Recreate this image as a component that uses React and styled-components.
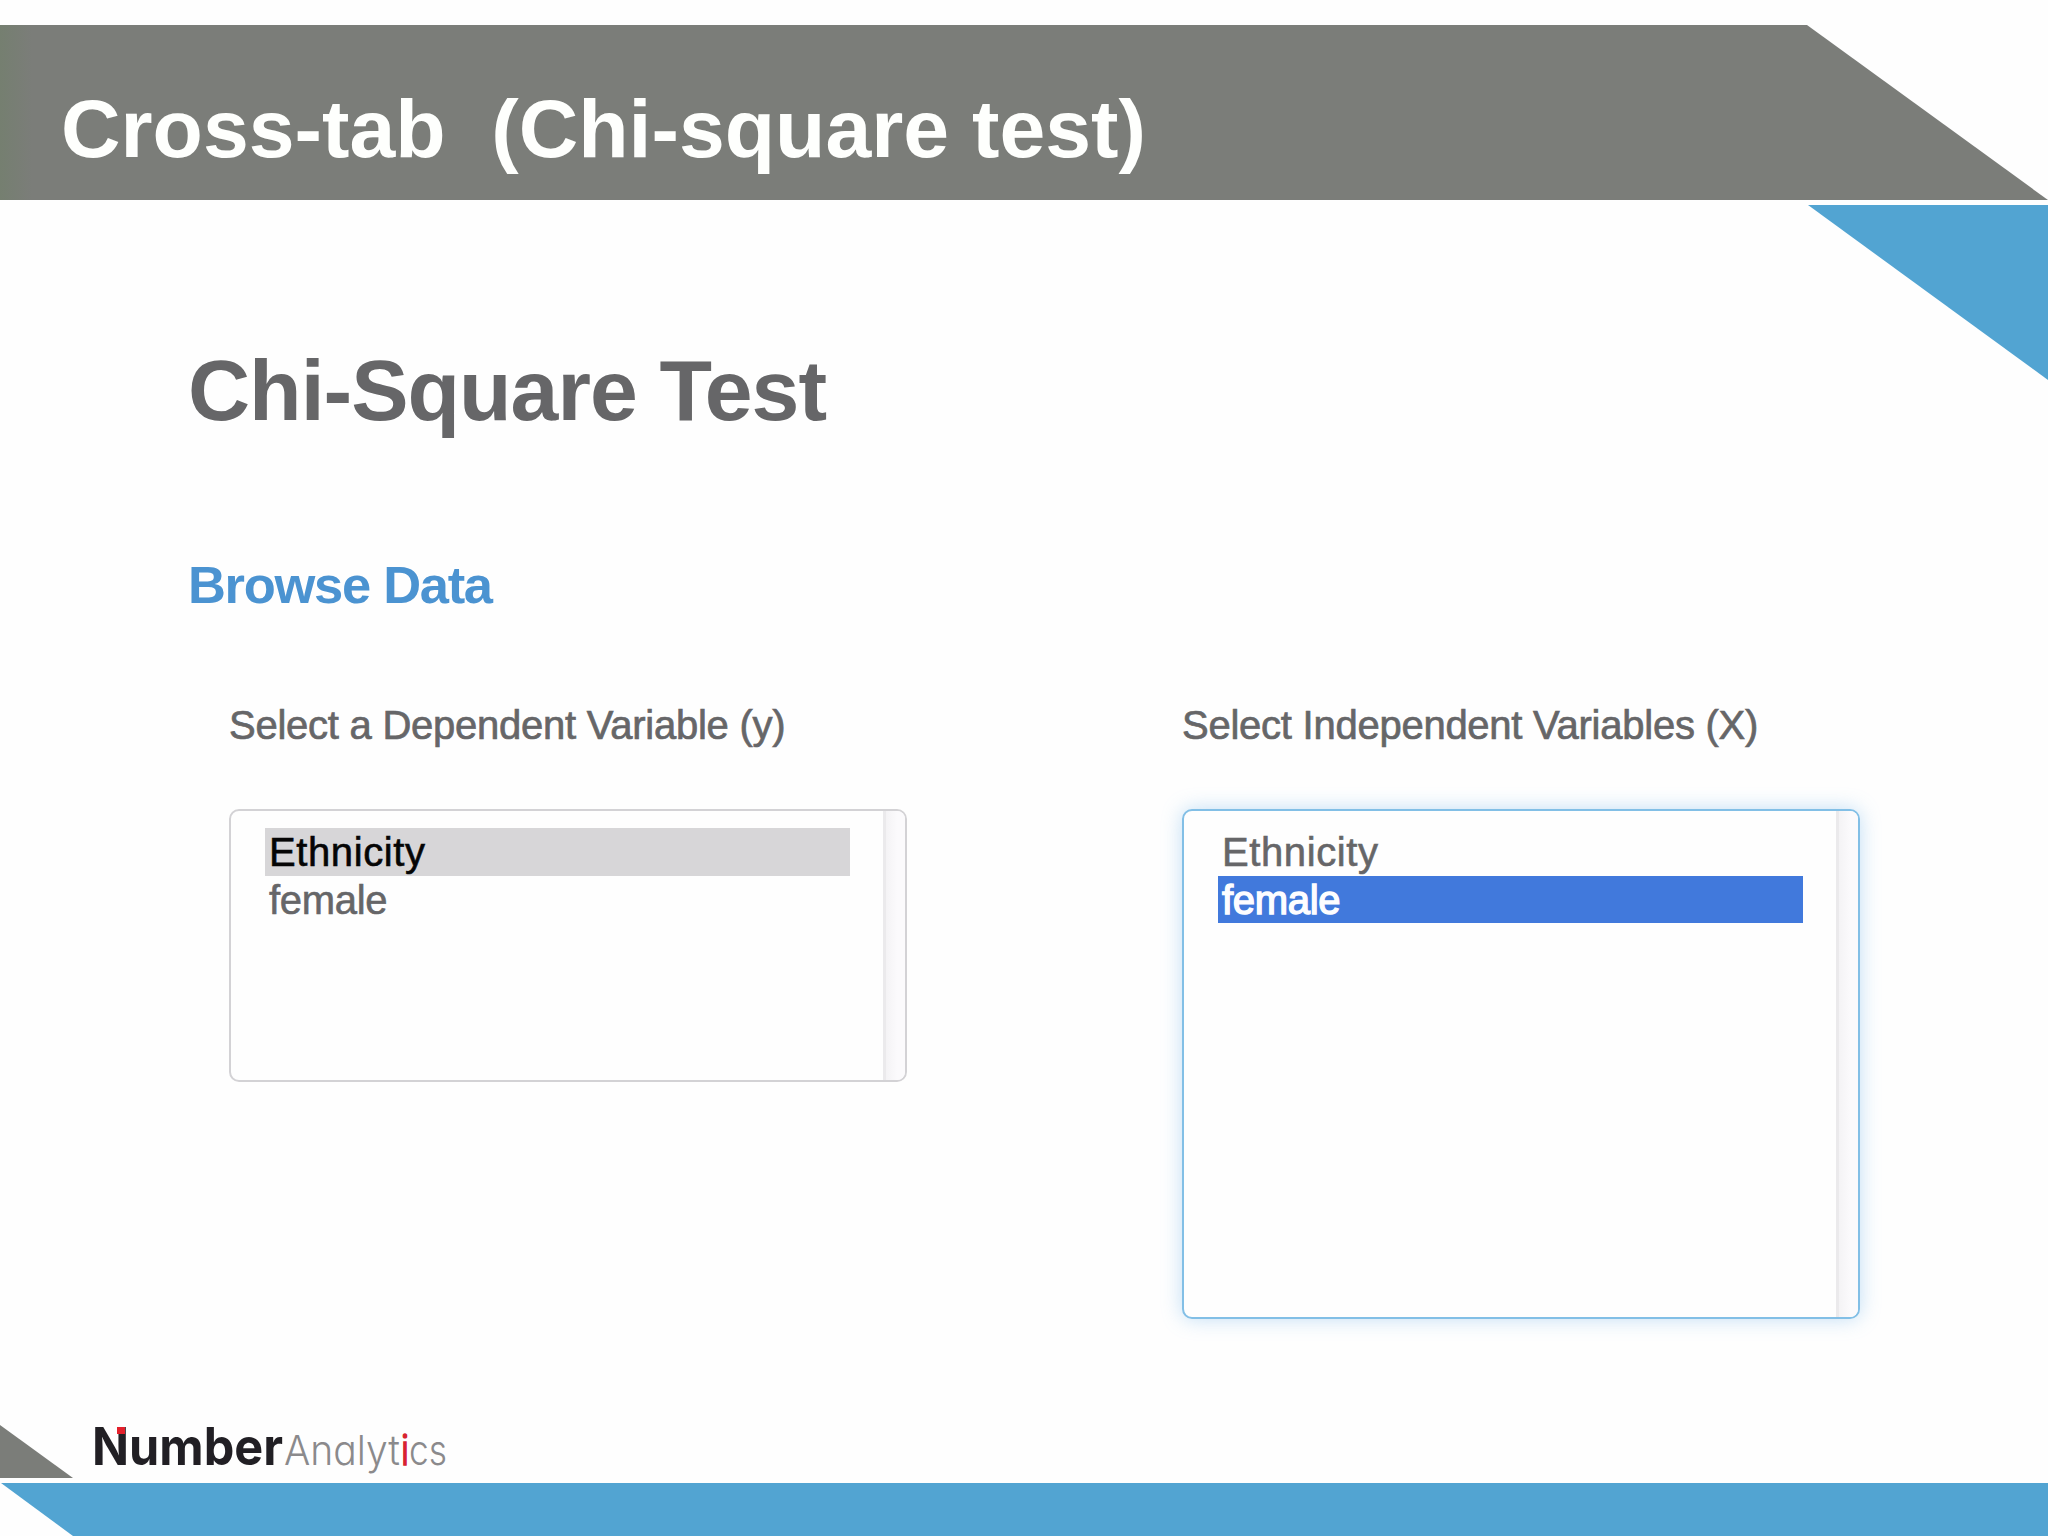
import { useState } from "react"
import styled, { createGlobalStyle } from "styled-components"

const GlobalStyle = createGlobalStyle`
  * {
    box-sizing: border-box;
    margin: 0;
    padding: 0;
  }

  body {
    background-color: #fefefe;
    font-family: "Liberation Sans", Arial, sans-serif;
  }
`

const Slide = styled.div`
  position: relative;
  display: flex;
  flex-direction: column;
  width: 2048px;
  height: 1536px;
  padding-top: 25px;
  overflow: hidden;
  background-color: #fefefe;
`

const Banner = styled.header`
  display: flex;
  align-items: center;
  flex: none;
  height: 175px;
  padding: 30px 61px 0;
  background: linear-gradient(90deg, #757f70 0, #7b7d79 32px);
  clip-path: polygon(0 0, 1807px 0, 100% 100%, 0 100%);
`

const BannerTitle = styled.h1`
  color: #fefffd;
  font-size: 82.4px;
  line-height: 92px;
  white-space: pre;
`

const Corner = styled.div`
  position: absolute;
  top: 205px;
  right: 0;
  width: 240px;
  height: 175px;
  background-color: #52a4d2;
  clip-path: polygon(0 0, 100% 0, 100% 100%);
`

const Content = styled.main`
  flex: 1;
  padding: 141px 188px 0 188px;
`

const TestTitle = styled.h2`
  color: #666668;
  font-size: 86px;
  line-height: 98px;
  letter-spacing: -1px;
`

const SectionTitle = styled.h3`
  margin-top: 116px;
  color: #4b93d1;
  font-size: 52.5px;
  line-height: 60px;
  letter-spacing: -1.3px;
`

const Fields = styled.div`
  display: flex;
  justify-content: space-between;
  align-items: flex-start;
  margin-top: 87px;
  padding-left: 41px;
`

const Field = styled.div`
  width: 678px;
`

const Label = styled.p`
  color: #666668;
  font-size: 40px;
  line-height: 46px;
  letter-spacing: -0.25px;
  white-space: nowrap;
  -webkit-text-stroke: 0.7px #666668;
`

const ListBox = styled.div`
  display: flex;
  height: ${props => props.$height}px;
  margin-top: 61px;
  border: 2px solid ${props => props.$focused ? "#82bfe6" : "#d3d2d5"};
  border-radius: 10px;
  overflow: hidden;
  background-color: #fefefe;
  box-shadow: ${props => props.$focused ? "0 0 20px rgba(102, 175, 233, 0.4)" : "none"};
`

const Options = styled.ul`
  flex: 1;
  padding: 17px 33px 0 34px;
  list-style: none;
`

const Track = styled.div`
  width: 22px;
  border-left: 3px solid #ebeaec;
  background: linear-gradient(90deg, #f4f3f5, #fbfafc 60%);
`

const optionColors = {
  none: ["transparent", "#666668"],
  blurred: ["#d7d6d8", "#050505"],
  focused: ["#4179dc", "#fdfdff"]
}

const Option = styled.li`
  height: 47.5px;
  padding-left: 4px;
  background-color: ${props => optionColors[props.$state][0]};
  color: ${props => optionColors[props.$state][1]};
  font-size: 40px;
  line-height: 48px;
  letter-spacing: ${props => props.$spacing}px;
  -webkit-text-stroke: ${props => props.$state === "focused" ? "1.4px" : "0.6px"};
  cursor: default;
`

const Footer = styled.footer`
  flex: none;
  height: 119px;
`

const FooterTop = styled.div`
  display: flex;
  align-items: flex-end;
  height: 66px;
`

const Wedge = styled.div`
  width: 73px;
  height: 53px;
  margin-bottom: 5px;
  background-color: #7b7d79;
  clip-path: polygon(0 0, 100% 100%, 0 100%);
`

const FooterBar = styled.div`
  height: 53px;
  background-color: #52a4d2;
  clip-path: polygon(1px 0, 100% 0, 100% 100%, 73px 100%);
`

const Wordmark = styled.svg`
  flex: none;
  width: 380px;
  height: 83px;
`

const Bold = styled.text`
  fill: #211f24;
  font-family: Inter, sans-serif;
  font-size: 52px;
  font-weight: 700;
`

// cv11 is Inter's single-storey "a"
const Thin = styled.text`
  fill: ${props => props.$red ? "#d8232f" : "#8b8a8c"};
  stroke: ${props => props.$red ? "#d8232f" : "none"};
  stroke-width: 1.5px;
  font-family: Inter, sans-serif;
  font-size: 41px;
  font-weight: 300;
  font-feature-settings: "cv11";
`

function Logo () {
  return (
    <Wordmark viewBox="73 1400 380 83">
      <Bold x="92" y="1465" textLength="191" lengthAdjust="spacingAndGlyphs">Number</Bold>
      <rect x="117" y="1427" width="8" height="7" fill="#e3202b" />
      <Thin x="284" y="1465" textLength="116" lengthAdjust="spacingAndGlyphs">Analyt</Thin>
      <Thin $red x="401" y="1465" textLength="8" lengthAdjust="spacingAndGlyphs">i</Thin>
      <Thin x="409" y="1465" textLength="38" lengthAdjust="spacingAndGlyphs">cs</Thin>
    </Wordmark>
  )
}

const variables = [
  { name: "Ethnicity", spacing: 0.6 },
  { name: "female", spacing: -0.3 }
]

function VariableSelect ({ label, height, initial, focused }) {
  const [selected, setSelected] = useState(initial)
  const activeState = focused ? "focused" : "blurred"

  return (
    <Field>
      <Label>{label}</Label>
      <ListBox $height={height} $focused={focused}>
        <Options>
          {variables.map(({ name, spacing }) => (
            <Option
              key={name}
              $spacing={spacing}
              $state={name === selected ? activeState : "none"}
              onClick={() => setSelected(name)}
            >
              {name}
            </Option>
          ))}
        </Options>
        <Track />
      </ListBox>
    </Field>
  )
}

function App () {
  return (
    <>
      <GlobalStyle />
      <Slide>
        <Banner>
          <BannerTitle>{"Cross-tab  (Chi-square test)"}</BannerTitle>
        </Banner>
        <Corner />
        <Content>
          <TestTitle>Chi-Square Test</TestTitle>
          <SectionTitle>Browse Data</SectionTitle>
          <Fields>
            <VariableSelect
              label="Select a Dependent Variable (y)"
              height={273}
              initial="Ethnicity"
            />
            <VariableSelect
              label="Select Independent Variables (X)"
              height={510}
              initial="female"
              focused
            />
          </Fields>
        </Content>
        <Footer>
          <FooterTop>
            <Wedge />
            <Logo />
          </FooterTop>
          <FooterBar />
        </Footer>
      </Slide>
    </>
  )
}

export default App
